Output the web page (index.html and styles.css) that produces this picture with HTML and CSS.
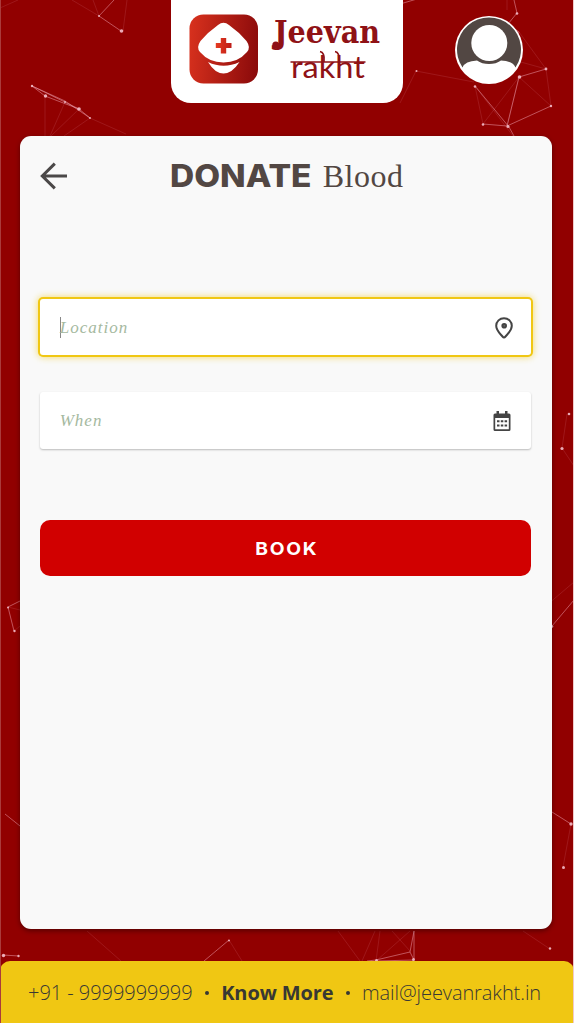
FILE: index.html
```html
<!DOCTYPE html>
<html lang="en">
<head>
<meta charset="utf-8">
<title>Jeevan rakht</title>
<link rel="stylesheet" href="styles.css">
</head>
<body>
<div class="page">
  <svg class="network" width="574" height="1023" viewBox="0 0 574 1023" aria-hidden="true">
    <g class="faint">
      <path d="M72 0l27 16M93 0l6 16M127 0l-4 31M0 8l18-8M45 96v40M65 102l-15 34M79 109l-28 27M90 118l-26 18M90 118l36 16M416 71l-16 32M416 71l58 11M519 32l27 37M510 59l36 10M546 69l5 37M519 77l32 29M519 77l-12 50M475 86l8 38M475 86l38 50M519 77l-36 47M507 0v10M87 931l34 30M229 940l13 21M338 931l22 30M375 931l-13 30M380 931l-4 30M410 931l-34 30M392 931l18 20M523 931l27 18M534 616l40-34M571 824l-8 43M567 414l-5 34M562 448l12 18M8 607l12 3M14 631l6-5"/>
    </g>
    <g class="links">
      <path d="M99 16l22 15M99 16l15-16M32 86l33 15 25 17-11-9-34-13zM32 86l47 23M400 4l17-5M514 0l3 13-9 11 11 8-9 27M519 77l27-8M519 77l-12 49M475 86l34 41M483 124l24 2 44-20M509 127l5 9M8 607l12-6M8 607l6 24M5 814l15 12M3 955l16 1M204 961l25-21M367 961l9-1 34-8 4 8-38 1M414 931v28M410 952l4-21M552 626l22-26M552 812l19 12"/>
    </g>
    <g class="nodes">
      <circle cx="121.500" cy="31" r="1.800"/><circle cx="99" cy="16" r="1"/><circle cx="32" cy="86" r="1.200"/><circle cx="45.500" cy="96" r="1.700"/><circle cx="65" cy="102" r="1"/><circle cx="79" cy="109" r="1.800"/><circle cx="90" cy="118" r="1"/><circle cx="416.500" cy="71" r="1"/><circle cx="475" cy="86.500" r="1.300"/><circle cx="519.500" cy="77" r="1.800"/><circle cx="546" cy="69" r="1.400"/><circle cx="551" cy="106" r="1.200"/><circle cx="483" cy="124.500" r="1.300"/><circle cx="508" cy="126.500" r="1.500"/><circle cx="517" cy="13.500" r="1.300"/><circle cx="569" cy="414" r="1.300"/><circle cx="562" cy="448.500" r="1.600"/><circle cx="8" cy="607.500" r="1"/><circle cx="14.500" cy="631" r="1.200"/><circle cx="552" cy="626.500" r="1.300"/><circle cx="571" cy="824" r="1.700"/><circle cx="563.500" cy="867.500" r="1.500"/><circle cx="3.500" cy="955.500" r="1.700"/><circle cx="18.500" cy="956" r="1.200"/><circle cx="229" cy="940.500" r="1"/><circle cx="376.500" cy="960.500" r="1.500"/><circle cx="413.500" cy="959.500" r="1.500"/><circle cx="550" cy="948.500" r="1.200"/>
    </g>
  </svg>

  <header class="header">
    <div class="brand">
      <svg class="brand-logo" width="232" height="103" viewBox="171 0 232 103" role="img" aria-label="Jeevan rakht">
        <defs>
          <linearGradient id="badge" x1="0" x2="1" y1="0.400" y2="0.500"><stop offset="0" stop-color="#d6301d"/><stop offset="1" stop-color="#8c0b0b"/></linearGradient>
          <linearGradient id="cross" x1="0" x2="1"><stop offset="0" stop-color="#e53a20"/><stop offset="1" stop-color="#bd1c18"/></linearGradient>
        </defs>
        <rect x="189.500" y="14.500" width="68.500" height="69" rx="14" fill="url(#badge)"/>
        <path d="M218 25Q223.500 20.500 229 25Q239 32 246.500 41Q251 47.500 247 52Q238 62.500 223.500 62.500T200 52Q196 47.500 200.500 41Q208 32 218 25Z" fill="#fff"/>
        <path d="M208 62Q223.500 69.500 239.500 62Q232 73.500 223.500 73.500T208 62Z" fill="#fff"/>
        <path d="M220.800 38h5.400v5h5.300v5h-5.300v5.500h-5.400V48h-5v-5h5z" fill="url(#cross)"/>
        <text class="word-jeevan" x="274" y="43" textLength="106" lengthAdjust="spacingAndGlyphs">Jeevan</text>
        <circle cx="275.800" cy="45" r="3.500" fill="#8f1216"/>
        <text class="word-rakht" x="291" y="77.500" textLength="74" lengthAdjust="spacingAndGlyphs">rakht</text>
        <path d="M290.500 62h75M320 51.500q5 1 4 10M335 51.500q5 1 4 10" fill="none" stroke="#8f1216" stroke-width="1.600"/>
      </svg>
    </div>
    <svg class="avatar" width="68" height="68" viewBox="0 0 68 68" role="img" aria-label="Profile">
      <circle cx="34" cy="34" r="34" fill="#fff"/>
      <path d="M7.500 51.500A32 32 0 1 1 60.500 51.500Q58 45 46 44.500Q41 48 34 48T22 44.500Q10 45 7.500 51.500Z" fill="#524743"/>
      <circle cx="34.300" cy="27" r="18" fill="#fff"/>
    </svg>
  </header>

  <main class="card">
    <div class="title-row">
      <svg class="back" width="28" height="28" viewBox="0 0 28 28" aria-label="Back"><path d="M14.800 1.600L2.300 14l12.500 12.400M2.500 14H27" fill="none" stroke="#4b4848" stroke-width="3"/></svg>
      <h1 class="title"><span class="title-strong">DONATE</span><span class="title-light">Blood</span></h1>
    </div>
    <div class="field field-active">
      <span class="caret"></span><span class="placeholder">Location</span>
      <svg class="pin" width="18" height="22" viewBox="0 0 18 22"><path d="M9 1.200C4.700 1.200 1.200 4.500 1.200 8.800C1.200 13.500 5 16.500 7.500 19.500Q9 21.300 10.500 19.500C13 16.500 16.800 13.500 16.800 8.800C16.800 4.500 13.300 1.200 9 1.200Z" fill="none" stroke="#444" stroke-width="2"/><circle cx="9.200" cy="8.800" r="2.800" fill="#444"/><circle cx="9.200" cy="8.800" r=".6" fill="#888"/></svg>
    </div>
    <div class="field">
      <span class="placeholder">When</span>
      <svg class="calendar" width="18" height="20" viewBox="0 0 18 20"><path fill="#444" fill-rule="evenodd" d="M3.500 0h2.500v2.500h6V0h2.500v2.500H16q1.500 0 1.500 1.500V18.500q0 1.500-1.500 1.500H2q-1.500 0-1.500-1.500V4q0-1.500 1.500-1.500h1.500zM2.200 7v11.300h13.600V7z"/><path d="M4 9.200h2.500v2H4zM7.800 9.200h2.500v2H7.800zM11.600 9.200h2.500v2h-2.500zM4 13.500h2.500v2H4zM7.800 13.500h2.500v2H7.800zM11.600 13.500h2.500v2h-2.500z" fill="#444"/></svg>
    </div>
    <button class="book" type="button"><span class="book-label">BOOK</span></button>
  </main>

  <footer class="footer">
    <span class="phone">+91 - 9999999999</span><span class="dot"></span><strong class="more">Know More</strong><span class="dot"></span><span class="mail">mail@jeevanrakht.in</span>
  </footer>
</div>
</body>
</html>
```
FILE: styles.css
```css
* { box-sizing: border-box; }
body { margin: 0; background: #910000; }
.page {
  position: relative;
  display: flex;
  flex-direction: column;
  height: 1023px;
  overflow: hidden;
  border-left: 1px solid #aa3b3b;
  border-right: 1px solid #f0caca;
  background: #910000;
}
.network { position: absolute; top: 0; left: -1px; fill: none; stroke: #f2a5b5; }
.network .faint { stroke-width: .8; opacity: .18; }
.network .links { stroke-width: 1; opacity: .5; }
.network .nodes { fill: #f3bdc9; stroke: none; opacity: .9; }
.header, .card, .footer { position: relative; }
.header { display: flex; gap: 52px; height: 136.400px; padding-left: 170px; }
.brand { width: 232px; height: 103px; background: #fff; border-radius: 0 0 20px 20px; }
.brand-logo { display: block; }
.word-jeevan { font: 900 32px "DejaVu Serif", serif; fill: #8f1216; }
.word-rakht { font: 400 30px Lato, sans-serif; fill: #8f1216; }
.avatar { margin-top: 16px; }
.card {
  display: flex;
  flex-direction: column;
  width: 531.500px;
  height: 793px;
  margin-left: 19.200px;
  padding: 0 21px 0 20px;
  border-radius: 11px;
  background: #f9f9f9;
  box-shadow: 0 2px 5px rgba(0, 0, 0, .4);
}
.title-row { display: flex; align-items: center; height: 80px; }
.back { flex: none; margin-left: -.5px; }
.title { display: flex; align-items: baseline; margin: 0 0 0 102px; color: #524743; font-weight: 400; line-height: 40px; white-space: nowrap; }
.title-strong { width: 153px; font: 800 31px/40px Inter, sans-serif; transform: scaleX(1.08); transform-origin: 0 50%; }
.title-light { font: 32px/40px "Liberation Serif", serif; letter-spacing: .5px; }
.field {
  display: flex;
  align-items: center;
  height: 57px;
  margin-top: 37px;
  padding: 0 20px 0 19.500px;
  border-radius: 3px;
  background: #fff;
  box-shadow: 0 1px 2px rgba(0, 0, 0, .25);
}
.field-active { height: 56px; margin-top: 83px; box-shadow: 0 0 0 2px #f0c713, 0 0 7px 2px rgba(240, 199, 19, .65); }
.caret { width: 1px; height: 21px; margin-right: -1px; background: #888; }
.placeholder { flex: 1; padding-top: 1px; color: #a5b9a0; font: italic 17px "Liberation Serif", serif; letter-spacing: 1px; }
.pin { margin: 1px -2px 0 0; }
.book {
  height: 56px;
  margin-top: 71px;
  padding: 0;
  border: 0;
  border-radius: 10px;
  background: #d10000;
  color: #fff;
  font: 700 17.500px Inter, sans-serif;
  letter-spacing: 1.500px;
}
.book-label { display: inline-block; padding-left: 3px; transform: scaleX(1.1); }
.footer {
  display: flex;
  align-items: center;
  height: 62px;
  margin: auto -1px 0;
  padding: 1px 0 0 28px;
  border-radius: 10px 10px 0 0;
  background: #f0c713;
  color: #383833;
  font: 300 20px "Open Sans", sans-serif;
  letter-spacing: -.04px;
  white-space: nowrap;
}
.more { font-weight: 700; letter-spacing: -.12px; }
.mail { letter-spacing: -.09px; }
.dot { flex: none; width: 4px; height: 4px; margin: 0 12.300px; border-radius: 50%; background: #383833; }
```
